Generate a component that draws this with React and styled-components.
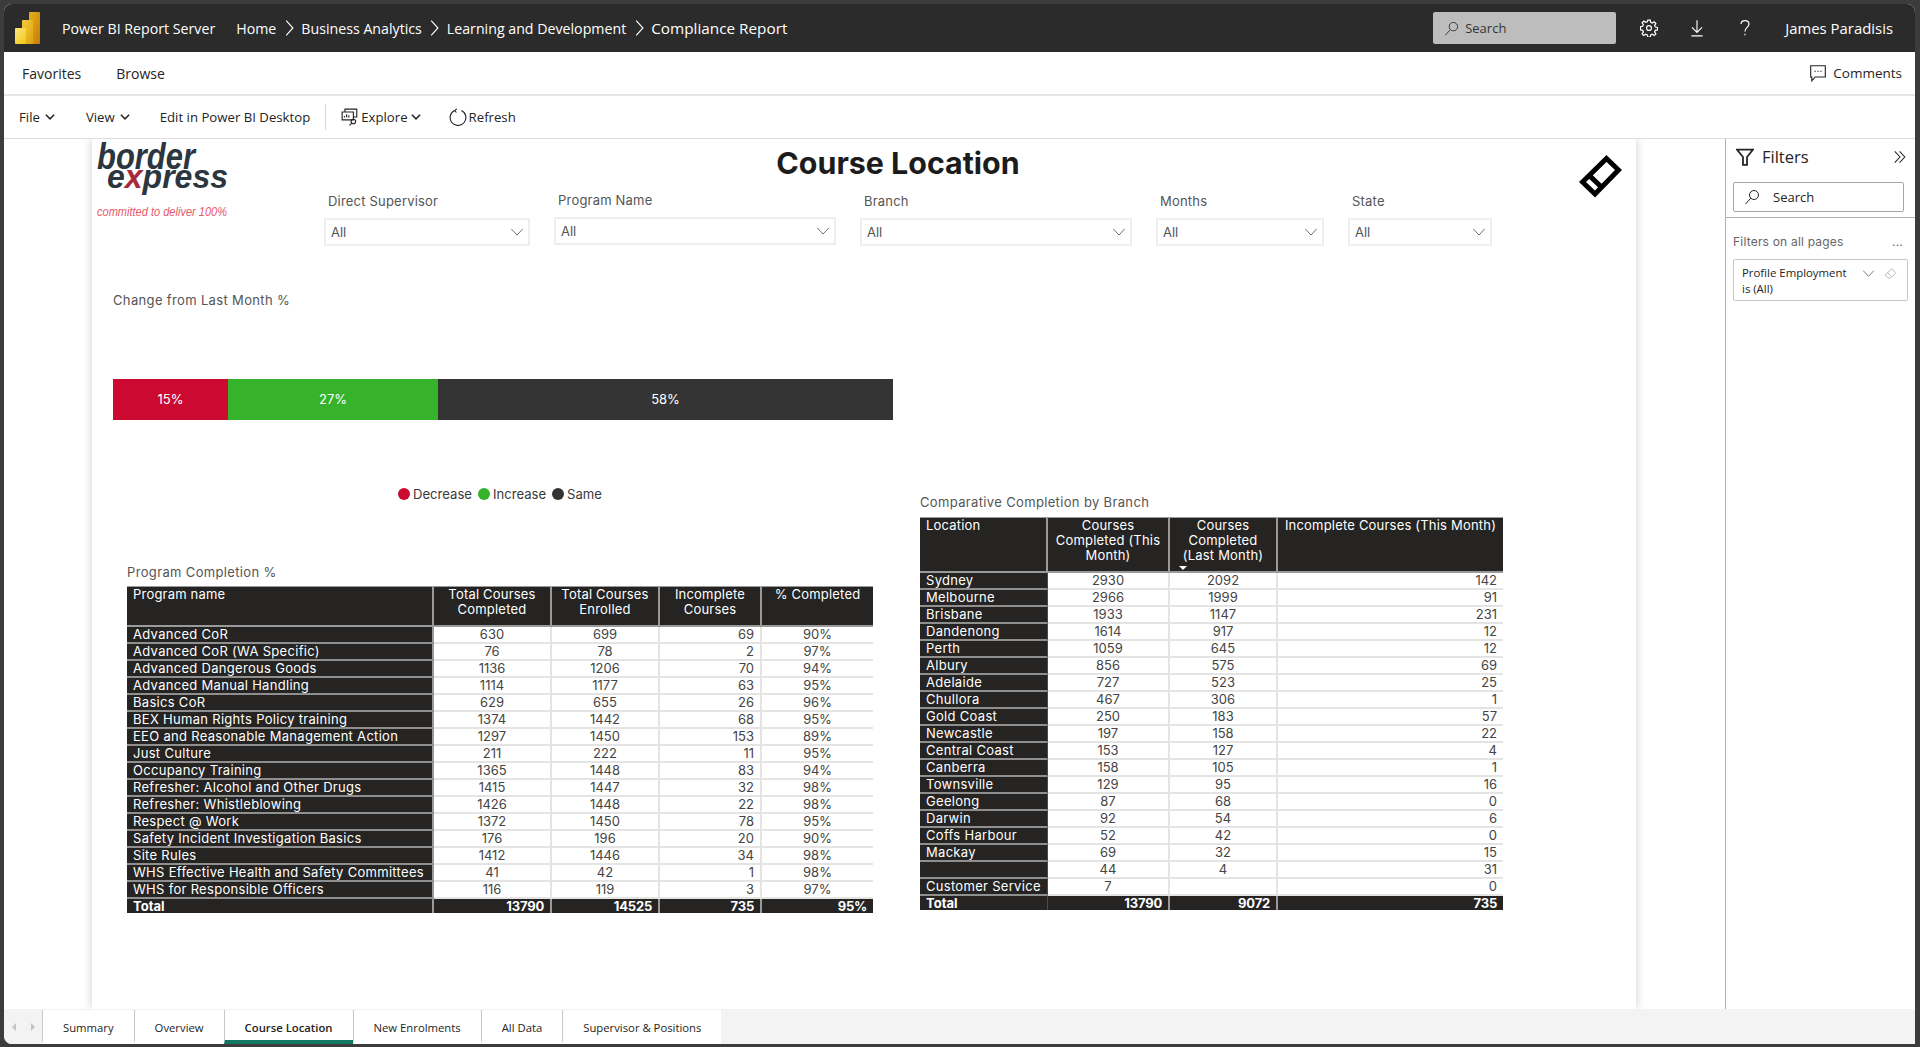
import React from 'react';
import styled, { createGlobalStyle } from 'styled-components';

const GlobalStyle = createGlobalStyle`
  html, body {
    margin: 0;
    height: 100%;
    overflow: hidden;
    background: #3c3c3c;
  }
  #root {
    height: 100%;
  }
`;

const ui = `"Open Sans", "Noto Sans", sans-serif`;
const report = `Inter, "Open Sans", sans-serif`;

const Frame = styled.div`
  box-sizing: border-box;
  height: 100%;
  padding: 4px 5px 3px 4px;
  font-family: ${ui};
  color: #252423;
`;

const Shell = styled.div`
  display: flex;
  flex-direction: column;
  height: 100%;
  background: #fff;
  border-radius: 8px 8px 0 8px;
  overflow: hidden;
`;

/* top dark bar */
const TopBar = styled.header`
  display: flex;
  align-items: center;
  flex: 0 0 48px;
  padding: 0 22px 0 11px;
  background: #2b2b2b;
  color: #fff;
  font-size: 14.2px;
`;

const Brand = styled.span`
  margin: 0 21px 0 22px;
`;

const Crumbs = styled.nav`
  display: flex;
  align-items: center;
  gap: 3.5px;
`;

const CurrentCrumb = styled.span`
  font-size: 15.3px;
`;

const TopSearch = styled.div`
  display: flex;
  align-items: center;
  gap: 6px;
  box-sizing: border-box;
  width: 183px;
  height: 32px;
  margin-left: auto;
  padding-left: 11px;
  background: #bdbdbd;
  border-radius: 2px;
  color: #333;
  font-size: 13px;
`;

const TopIcons = styled.div`
  display: flex;
  align-items: center;
  gap: 30px;
  margin: 0 31px 0 24px;
`;

const UserName = styled.span`
  font-size: 14.9px;
`;

/* favorites row */
const NavRow = styled.div`
  display: flex;
  align-items: center;
  flex: 0 0 42px;
  gap: 35px;
  padding: 0 13px 0 18px;
  border-bottom: 2px solid #e6e6e6;
  font-size: 14px;
`;

const CommentsLink = styled.span`
  display: flex;
  align-items: center;
  gap: 6px;
  margin-left: auto;
  font-size: 13.5px;
`;

/* command toolbar */
const Toolbar = styled.div`
  display: flex;
  align-items: center;
  flex: 0 0 42px;
  padding-left: 15px;
  border-bottom: 1px solid #dcdcdc;
  font-size: 13.2px;
`;

const ToolItem = styled.span`
  display: flex;
  align-items: center;
  gap: ${(p) => p.$gap || 4}px;
  margin-right: ${(p) => p.$after || 0}px;
`;

const ToolDivider = styled.span`
  width: 1px;
  height: 26px;
  margin: 0 15px;
  background: #d6d6d6;
`;

/* canvas area */
const Main = styled.div`
  display: flex;
  flex: 1;
  min-height: 0;
`;

const Canvas = styled.main`
  flex: 1;
  padding-left: 88px;
  overflow: hidden;
`;

const Page = styled.div`
  width: 1544px;
  height: 100%;
  background: #fff;
  box-shadow: 0 0 9px rgba(0, 0, 0, 0.2);
  font-family: ${report};
  color: #3a3a3a;
`;

const Top = styled.div`
  display: grid;
  grid-template-columns: 232px 1148px auto;
  grid-template-rows: 54px auto;
  height: 107px;
`;

const Logo = styled.svg`
  grid-row: 1 / 3;
  display: block;
  margin-left: 5px;
  overflow: visible;
  font-family: "Liberation Sans", sans-serif;
  font-style: italic;
`;

const Title = styled.h1`
  margin: 7px 0 0;
  text-align: center;
  font-size: 30.4px;
  line-height: 34px;
  font-weight: 700;
  color: #1c1c1c;
  font-family: ${report};
`;

const Mark = styled.svg`
  display: block;
  margin: 16px 0 0 107px;
`;

const Slicers = styled.div`
  grid-column: 2 / 4;
  display: flex;
  gap: 24px;
  align-items: flex-start;
`;

const Slicer = styled.div`
  width: ${(p) => p.$w}px;
  margin-top: ${(p) => p.$lift || 0}px;
`;

const SlicerLabel = styled.div`
  padding-left: 4px;
  font-size: 13px;
  line-height: 16px;
  letter-spacing: 0.2px;
  color: #555;
`;

const SlicerBox = styled.div`
  display: flex;
  align-items: center;
  justify-content: space-between;
  box-sizing: border-box;
  height: 28px;
  margin-top: 9px;
  padding: 0 4px 0 5px;
  border: 2px solid #eeeeee;
  font-size: 13px;
  color: #555;
`;

const Panels = styled.div`
  display: flex;
`;

const LeftPanel = styled.section`
  width: 780px;
  margin-left: 21px;
`;

const RightPanel = styled.section`
  margin-left: 27px;
  padding-top: 248px;
`;

const VisualTitle = styled.div`
  margin-top: ${(p) => p.$top || 0}px;
  margin-left: ${(p) => p.$left || 0}px;
  font-size: 13px;
  line-height: 16px;
  letter-spacing: 0.35px;
  color: #555;
`;

const StackBar = styled.div`
  display: flex;
  height: 41px;
  margin-top: 71px;
`;

const StackPart = styled.div`
  display: flex;
  align-items: center;
  justify-content: center;
  box-sizing: border-box;
  width: ${(p) => p.$w}px;
  padding-bottom: 1px;
  background: ${(p) => p.$color};
  color: #fff;
  font-size: 13px;
`;

const Legend = styled.div`
  display: flex;
  gap: 6px;
  margin: 66px 0 0 285px;
  font-size: 13.1px;
  line-height: 16px;
`;

const LegendItem = styled.span`
  display: flex;
  align-items: center;
  gap: 3px;
`;

const LegendDot = styled.i`
  width: 12px;
  height: 12px;
  border-radius: 50%;
  background: ${(p) => p.$color};
`;

const Table = styled.table`
  box-sizing: border-box;
  margin-top: ${(p) => p.$top}px;
  margin-left: ${(p) => p.$left || 0}px;
  border-collapse: separate;
  border-spacing: 0;
  table-layout: fixed;
  width: ${(p) => p.$w}px;
  font-size: 13px;
  line-height: 15px;
`;

const Col = styled.col`
  width: ${(p) => p.$w}px;
`;

const Head = styled.th`
  position: relative;
  box-sizing: border-box;
  height: ${(p) => p.$h}px;
  padding: 0 4px;
  padding-left: ${(p) => (p.$align === 'left' ? 6 : 4)}px;
  vertical-align: top;
  background: #252423;
  border-top: 1px solid #9a9a9a;
  border-bottom: 2px solid #9a9a9a;
  border-right: 2px solid #9a9a9a;
  color: #fff;
  font-weight: 400;
  letter-spacing: 0.2px;
  text-align: ${(p) => p.$align || 'center'};
  &:last-child {
    border-right: 0;
  }
`;

const SortArrow = styled.i`
  position: absolute;
  left: 9px;
  bottom: 1px;
  border-left: 4px solid transparent;
  border-right: 4px solid transparent;
  border-top: 4px solid #fff;
`;

const RowHead = styled.td`
  box-sizing: border-box;
  height: 17px;
  padding: 0 0 0 6px;
  background: #252423;
  border-bottom: 2px solid #8f8f8f;
  border-right: ${(p) => (p.$accent ? '1px solid #c8102e' : '2px solid #9a9a9a')};
  color: #fff;
  letter-spacing: 0.3px;
  white-space: nowrap;
`;

const Cell = styled.td`
  box-sizing: border-box;
  height: 17px;
  padding: 0 6px;
  background: #fff;
  border-bottom: 2px solid #e4e4e4;
  border-right: 2px solid #e4e4e4;
  color: #444;
  text-align: ${(p) => p.$align || 'center'};
  &:last-child {
    border-right: 0;
  }
`;

const TotalHead = styled.td`
  box-sizing: border-box;
  height: 14px;
  padding: 0 0 0 6px;
  background: #252423;
  border-right: ${(p) => (p.$accent ? '1px solid #c8102e' : '2px solid #9a9a9a')};
  color: #fff;
  font-weight: 700;
  line-height: 13px;
`;

const TotalCell = styled.td`
  box-sizing: border-box;
  height: 14px;
  padding: 0 6px;
  background: #252423;
  border-right: 2px solid #9a9a9a;
  color: #fff;
  font-weight: 700;
  line-height: 13px;
  letter-spacing: -0.2px;
  text-align: right;
  &:last-child {
    border-right: 0;
  }
`;

/* filters pane */
const FilterPane = styled.aside`
  flex: 0 0 190px;
  box-sizing: border-box;
  border-left: 1px solid #b0b0b0;
`;

const FilterHead = styled.div`
  display: flex;
  align-items: center;
  height: 35px;
  padding: 0 8px 0 10px;
  font-size: 16.5px;
`;

const FilterHeadText = styled.span`
  margin-left: 8px;
  margin-right: auto;
`;

const FilterSearch = styled.div`
  display: flex;
  align-items: center;
  gap: 13px;
  box-sizing: border-box;
  width: 171px;
  height: 30px;
  margin: 8px 0 5px 7px;
  padding-left: 10px;
  border: 1px solid #a6a6a6;
  border-radius: 2px;
  font-size: 13px;
`;

const FilterBody = styled.div`
  padding: 16px 7px 0;
  border-top: 1px solid #b0b0b0;
`;

const FilterCaption = styled.div`
  display: flex;
  justify-content: space-between;
  padding-right: 5px;
  font-family: ${report};
  font-size: 12px;
  line-height: 16px;
  letter-spacing: 0.2px;
  color: #666;
`;

const FilterCard = styled.div`
  display: flex;
  box-sizing: border-box;
  width: 175px;
  height: 42px;
  margin-top: 9px;
  padding: 5px 10px 0 8px;
  border: 1px solid #c8c8c8;
  border-radius: 2px;
  font-size: 11.4px;
  line-height: 16px;
`;

const FilterCardText = styled.span`
  flex: 1;
  padding-right: 14px;
`;

const FilterCardIcons = styled.span`
  display: flex;
  gap: 9px;
  padding-top: 2px;
`;

/* page tabs */
const TabStrip = styled.div`
  display: flex;
  flex: 0 0 35px;
  background: #f3f3f3;
  font-size: 11.3px;
`;

const TabArrows = styled.div`
  display: flex;
  align-items: center;
  justify-content: space-around;
  width: 38px;
`;

const TabArrow = styled.i`
  border-top: 4px solid transparent;
  border-bottom: 4px solid transparent;
  border-${(p) => (p.$left ? 'right' : 'left')}: 4px solid #c4c4c4;
`;

const Tab = styled.div`
  display: flex;
  align-items: center;
  box-sizing: border-box;
  padding: 5px 20px 0;
  margin-top: 1px;
  background: #fff;
  border-left: 1px solid #c8c8c8;
  border-bottom: 4px solid ${(p) => (p.$active ? '#117865' : '#fff')};
  font-weight: ${(p) => (p.$active ? 600 : 400)};
`;

const Line = ({ d, size = 16, w = 1, color = 'currentColor', children }) => (
  <svg width={size} height={size} viewBox="0 0 16 16" fill="none" stroke={color} strokeWidth={w}>
    {d && <path d={d} />}
    {children}
  </svg>
);

const PowerBiLogo = () => (
  <svg width="25" height="32" viewBox="0 0 25 32">
    <defs>
      <linearGradient id="pbi1" x1="0" y1="0" x2="1" y2="1">
        <stop offset="0" stopColor="#e9b016" />
        <stop offset="1" stopColor="#c27c0e" />
      </linearGradient>
      <linearGradient id="pbi2" x1="0" y1="0" x2="1" y2="1">
        <stop offset="0" stopColor="#f5ca3a" />
        <stop offset="1" stopColor="#e0a30f" />
      </linearGradient>
      <linearGradient id="pbi3" x1="0" y1="0" x2="1" y2="1">
        <stop offset="0" stopColor="#f9e583" />
        <stop offset="1" stopColor="#f2c811" />
      </linearGradient>
    </defs>
    <rect x="14" y="0" width="11" height="32" rx="1" fill="url(#pbi1)" />
    <rect x="7" y="8" width="11" height="24" rx="1" fill="url(#pbi2)" />
    <rect x="0" y="16" width="11" height="16" rx="1" fill="url(#pbi3)" />
  </svg>
);

const BorderExpressLogo = () => (
  <Logo width="133" height="84" viewBox="0 0 133 84">
    <text x="0" y="30" fontSize="36" fontWeight="700" fill="#2c3640" textLength="98" lengthAdjust="spacingAndGlyphs">border</text>
    <text x="10" y="49" fontSize="33" fontWeight="700" fill="#2c3640" textLength="121" lengthAdjust="spacingAndGlyphs">
      e<tspan fill="#a52a3a">x</tspan>press
    </text>
    <text x="0" y="77" fontSize="12.5" fill="#e8596a" textLength="130" lengthAdjust="spacingAndGlyphs">committed to deliver 100%</text>
  </Logo>
);

const Crumb = () => <Line size={18} d="M5.5 1.5 L11.5 8 L5.5 14.5" />;

const SearchGlyph = ({ size = 16 }) => (
  <Line size={size} w={1}>
    <circle cx="10" cy="6" r="4.5" />
    <path d="M6.7 9.3 L1.5 15" />
  </Line>
);

const Gear = () => (
  <Line size={18} w={1.1}>
    <circle cx="8" cy="8" r="2.2" />
    <path d="M6.9 1h2.2l.4 2 1.4.6 1.7-1.1 1.5 1.5-1.1 1.7.6 1.4 2 .4v2.2l-2 .4-.6 1.4 1.1 1.7-1.5 1.5-1.7-1.1-1.4.6-.4 2H6.9l-.4-2-1.4-.6-1.7 1.1-1.5-1.5 1.1-1.7-.6-1.4-2-.4V6.9l2-.4.6-1.4-1.1-1.7 1.5-1.5 1.7 1.1 1.4-.6z" />
  </Line>
);

const Download = () => <Line size={18} d="M8 1 V12 M3.5 7.5 L8 12 L12.5 7.5 M3 15 H13" />;

const Question = () => <Line size={18} w={1.1} d="M4.5 4.5 C4.5 0.5 11.5 0.5 11.5 4.5 C11.5 7.5 8 7.5 8 11 M8 13 V14.5" />;

const CommentGlyph = () => (
  <Line size={18} d="M1.5 1.5 H14.5 V11.5 H5.5 L2.5 15 V11.5 H1.5 Z M5 6.5 H5.9 M7.6 6.5 H8.5 M10.2 6.5 H11.1" />
);

const SmallChevron = () => <Line size={12} w={2} d="M2.5 5 L8 10.5 L13.5 5" />;

const ThinChevron = ({ size = 14 }) => <Line size={size} d="M1.5 4.5 L8 11.5 L14.5 4.5" color="#605e5c" />;

const ExploreGlyph = () => (
  <Line size={18} w={1}>
    <path d="M3.5 3.5 V1 H14 V8 H11 M1 3.5 H11 V10.5 H1 Z M3 8.5 V7 M5 8.5 V5.5 M7 8.5 V6.5" />
    <circle cx="11" cy="12" r="2" />
    <path d="M9.5 13.5 L7.5 15.5" />
  </Line>
);

const RefreshGlyph = () => (
  <Line size={18} d="M5 2.2 A7 7 0 1 0 11 2.2 M5 2.2 L7 0.8 M5 2.2 L6.6 4" />
);

const Funnel = () => (
  <Line size={18} w={1.6} d="M1 1.5 H15 L9.8 8 V15 H6.2 V8 Z" />
);

const DoubleChevron = () => <Line size={14} w={1.2} d="M2 1.5 L8 8 L2 14.5 M7.5 1.5 L13.5 8 L7.5 14.5" />;

const Eraser = () => (
  <Line size={13} color="#a6a6a6" d="M9.5 2 L14.5 7 L8 13.5 H5 L1.5 10 Z M4.5 7 L9 11.5" />
);

const DiamondMark = () => (
  <Mark width="43" height="43" viewBox="0 0 43 43" fill="none" stroke="#000" strokeWidth="5" strokeLinejoin="miter">
    <path d="M27.5 3.5 L39.5 15 L16 39 L3.5 27 Z M10.2 20.4 L22.6 32.3" />
  </Mark>
);

const slicers = [
  { label: 'Direct Supervisor', w: 206 },
  { label: 'Program Name', w: 282, lift: -1 },
  { label: 'Branch', w: 272 },
  { label: 'Months', w: 168 },
  { label: 'State', w: 144 },
];

const programs = [
  ['Advanced CoR', 630, 699, 69, '90%'],
  ['Advanced CoR (WA Specific)', 76, 78, 2, '97%'],
  ['Advanced Dangerous Goods', 1136, 1206, 70, '94%'],
  ['Advanced Manual Handling', 1114, 1177, 63, '95%'],
  ['Basics CoR', 629, 655, 26, '96%'],
  ['BEX Human Rights Policy training', 1374, 1442, 68, '95%'],
  ['EEO and Reasonable Management Action', 1297, 1450, 153, '89%'],
  ['Just Culture', 211, 222, 11, '95%'],
  ['Occupancy Training', 1365, 1448, 83, '94%'],
  ['Refresher: Alcohol and Other Drugs', 1415, 1447, 32, '98%'],
  ['Refresher: Whistleblowing', 1426, 1448, 22, '98%'],
  ['Respect @ Work', 1372, 1450, 78, '95%'],
  ['Safety Incident Investigation Basics', 176, 196, 20, '90%'],
  ['Site Rules', 1412, 1446, 34, '98%'],
  ['WHS Effective Health and Safety Committees', 41, 42, 1, '98%'],
  ['WHS for Responsible Officers', 116, 119, 3, '97%'],
];

const branches = [
  ['Sydney', 2930, 2092, 142],
  ['Melbourne', 2966, 1999, 91],
  ['Brisbane', 1933, 1147, 231],
  ['Dandenong', 1614, 917, 12],
  ['Perth', 1059, 645, 12],
  ['Albury', 856, 575, 69],
  ['Adelaide', 727, 523, 25],
  ['Chullora', 467, 306, 1],
  ['Gold Coast', 250, 183, 57],
  ['Newcastle', 197, 158, 22],
  ['Central Coast', 153, 127, 4],
  ['Canberra', 158, 105, 1],
  ['Townsville', 129, 95, 16],
  ['Geelong', 87, 68, 0],
  ['Darwin', 92, 54, 6],
  ['Coffs Harbour', 52, 42, 0],
  ['Mackay', 69, 32, 15],
  ['', 44, 4, 31],
  ['Customer Service', 7, '', 0],
];

const tabs = ['Summary', 'Overview', 'Course Location', 'New Enrolments', 'All Data', 'Supervisor & Positions'];

const App = () => (
  <Frame>
    <GlobalStyle />
    <Shell>
      <TopBar>
        <PowerBiLogo />
        <Brand>Power BI Report Server</Brand>
        <Crumbs>
          <span>Home</span>
          <Crumb />
          <span>Business Analytics</span>
          <Crumb />
          <span>Learning and Development</span>
          <Crumb />
          <CurrentCrumb>Compliance Report</CurrentCrumb>
        </Crumbs>
        <TopSearch>
          <SearchGlyph size={15} />
          Search
        </TopSearch>
        <TopIcons>
          <Gear />
          <Download />
          <Question />
        </TopIcons>
        <UserName>James Paradisis</UserName>
      </TopBar>

      <NavRow>
        <span>Favorites</span>
        <span>Browse</span>
        <CommentsLink>
          <CommentGlyph />
          Comments
        </CommentsLink>
      </NavRow>

      <Toolbar>
        <ToolItem $after={30}>File <SmallChevron /></ToolItem>
        <ToolItem $after={29}>View <SmallChevron /></ToolItem>
        <ToolItem>Edit in Power BI Desktop</ToolItem>
        <ToolDivider />
        <ToolItem $after={27} $gap={2}><ExploreGlyph /> Explore <SmallChevron /></ToolItem>
        <ToolItem $gap={2}><RefreshGlyph /> Refresh</ToolItem>
      </Toolbar>

      <Main>
        <Canvas>
          <Page>
            <Top>
              <BorderExpressLogo />
              <Title>Course Location</Title>
              <DiamondMark />
              <Slicers>
                {slicers.map((s) => (
                  <Slicer key={s.label} $w={s.w} $lift={s.lift}>
                    <SlicerLabel>{s.label}</SlicerLabel>
                    <SlicerBox>All <ThinChevron /></SlicerBox>
                  </Slicer>
                ))}
              </Slicers>
            </Top>

            <Panels>
              <LeftPanel>
                <VisualTitle $top={46}>Change from Last Month %</VisualTitle>
                <StackBar>
                  <StackPart $w={115} $color="#cc0a31">15%</StackPart>
                  <StackPart $w={210} $color="#36b32a">27%</StackPart>
                  <StackPart $w={455} $color="#343434">58%</StackPart>
                </StackBar>
                <Legend>
                  <LegendItem><LegendDot $color="#cc0a31" />Decrease</LegendItem>
                  <LegendItem><LegendDot $color="#36b32a" />Increase</LegendItem>
                  <LegendItem><LegendDot $color="#343434" />Same</LegendItem>
                </Legend>
                <VisualTitle $top={62} $left={14}>Program Completion %</VisualTitle>
                <Table $top={6} $left={14} $w={746}>
                  <colgroup>
                    <Col $w={307} /><Col $w={118} /><Col $w={108} /><Col $w={102} /><Col $w={111} />
                  </colgroup>
                  <thead>
                    <tr>
                      <Head $h={41} $align="left">Program name</Head>
                      <Head $h={41}>Total Courses Completed</Head>
                      <Head $h={41}>Total Courses Enrolled</Head>
                      <Head $h={41}>Incomplete Courses</Head>
                      <Head $h={41}>% Completed</Head>
                    </tr>
                  </thead>
                  <tbody>
                    {programs.map((r) => (
                      <tr key={r[0]}>
                        <RowHead>{r[0]}</RowHead>
                        <Cell>{r[1]}</Cell>
                        <Cell>{r[2]}</Cell>
                        <Cell $align="right">{r[3]}</Cell>
                        <Cell>{r[4]}</Cell>
                      </tr>
                    ))}
                    <tr>
                      <TotalHead>Total</TotalHead>
                      <TotalCell>13790</TotalCell>
                      <TotalCell>14525</TotalCell>
                      <TotalCell>735</TotalCell>
                      <TotalCell>95%</TotalCell>
                    </tr>
                  </tbody>
                </Table>
              </LeftPanel>

              <RightPanel>
                <VisualTitle>Comparative Completion by Branch</VisualTitle>
                <Table $top={7} $w={583}>
                  <colgroup>
                    <Col $w={128} /><Col $w={122} /><Col $w={108} /><Col $w={225} />
                  </colgroup>
                  <thead>
                    <tr>
                      <Head $h={56} $align="left">Location</Head>
                      <Head $h={56}>Courses Completed (This Month)</Head>
                      <Head $h={56}>Courses Completed (Last Month)<SortArrow /></Head>
                      <Head $h={56}>Incomplete Courses (This Month)</Head>
                    </tr>
                  </thead>
                  <tbody>
                    {branches.map((r, i) => (
                      <tr key={i}>
                        <RowHead $accent>{r[0]}</RowHead>
                        <Cell>{r[1]}</Cell>
                        <Cell>{r[2]}</Cell>
                        <Cell $align="right">{r[3]}</Cell>
                      </tr>
                    ))}
                    <tr>
                      <TotalHead $accent>Total</TotalHead>
                      <TotalCell>13790</TotalCell>
                      <TotalCell>9072</TotalCell>
                      <TotalCell>735</TotalCell>
                    </tr>
                  </tbody>
                </Table>
              </RightPanel>
            </Panels>
          </Page>
        </Canvas>

        <FilterPane>
          <FilterHead>
            <Funnel />
            <FilterHeadText>Filters</FilterHeadText>
            <DoubleChevron />
          </FilterHead>
          <FilterSearch>
            <SearchGlyph />
            Search
          </FilterSearch>
          <FilterBody>
            <FilterCaption>Filters on all pages <span>...</span></FilterCaption>
            <FilterCard>
              <FilterCardText>Profile Employment is (All)</FilterCardText>
              <FilterCardIcons>
                <ThinChevron size={13} />
                <Eraser />
              </FilterCardIcons>
            </FilterCard>
          </FilterBody>
        </FilterPane>
      </Main>

      <TabStrip>
        <TabArrows>
          <TabArrow $left />
          <TabArrow />
        </TabArrows>
        {tabs.map((t) => (
          <Tab key={t} $active={t === 'Course Location'}>{t}</Tab>
        ))}
      </TabStrip>
    </Shell>
  </Frame>
);

export default App;
